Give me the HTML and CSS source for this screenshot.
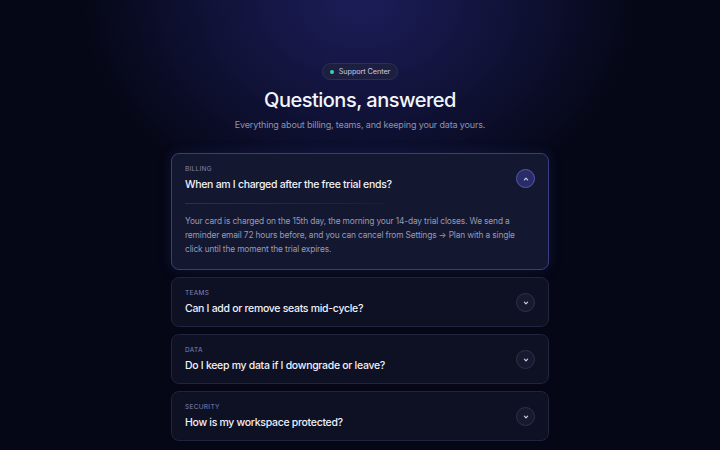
FILE: index.html
```html
<!DOCTYPE html>
<html lang="en">
<head>
    <meta charset="UTF-8">
    <meta name="viewport" content="width=device-width, initial-scale=1.0">
    <title>Support Center</title>
    <link rel="stylesheet" href="styles.css">
</head>
<body>
    <div class="glow"></div>
    <main class="container">
        <div class="badge"><span class="dot"></span>Support Center</div>
        <h1>Questions, answered</h1>
        <p class="lead">Everything about billing, teams, and keeping your data yours.</p>

        <div class="faq">
            <div class="item open">
                <div class="head">
                    <div>
                        <div class="tag">Billing</div>
                        <div class="question">When am I charged after the free trial ends?</div>
                    </div>
                    <span class="toggle">
                        <svg viewBox="0 0 10 10"><path d="M3.4 5.8 L5 4.2 L6.6 5.8"/></svg>
                    </span>
                </div>
                <div class="divider"></div>
                <p class="answer">Your card is charged on the 15th day, the morning your 14-day trial closes. We send a reminder email 72 hours before, and you can cancel from Settings → Plan with a single click until the moment the trial expires.</p>
            </div>

            <div class="item">
                <div class="head">
                    <div>
                        <div class="tag">Teams</div>
                        <div class="question">Can I add or remove seats mid-cycle?</div>
                    </div>
                    <span class="toggle">
                        <svg viewBox="0 0 10 10"><path d="M3.4 4.2 L5 5.8 L6.6 4.2"/></svg>
                    </span>
                </div>
            </div>

            <div class="item">
                <div class="head">
                    <div>
                        <div class="tag">Data</div>
                        <div class="question">Do I keep my data if I downgrade or leave?</div>
                    </div>
                    <span class="toggle">
                        <svg viewBox="0 0 10 10"><path d="M3.4 4.2 L5 5.8 L6.6 4.2"/></svg>
                    </span>
                </div>
            </div>

            <div class="item">
                <div class="head">
                    <div>
                        <div class="tag">Security</div>
                        <div class="question">How is my workspace protected?</div>
                    </div>
                    <span class="toggle">
                        <svg viewBox="0 0 10 10"><path d="M3.4 4.2 L5 5.8 L6.6 4.2"/></svg>
                    </span>
                </div>
            </div>
        </div>
    </main>
</body>
</html>
```

FILE: styles.css
```css
html, body {
    height: 100%;
}
body {
    margin: 0;
    font-family: "Inter", "Noto Sans", sans-serif;
    background-color: #050716;
    color: #e8eaf4;
    overflow: hidden;
    position: relative;
}
.glow {
    position: absolute;
    left: 0;
    right: 0;
    top: 0;
    height: 300px;
    background: radial-gradient(ellipse 280px 220px at 50% 0%, #1c1d58 0%, #12143d 45%, rgba(5,7,22,0) 100%);
    pointer-events: none;
}
.container {
    position: relative;
    width: 378px;
    margin: 0 auto;
    padding-top: 63px;
    text-align: center;
}
.badge {
    display: flex;
    width: fit-content;
    margin: 0 auto;
    align-items: center;
    gap: 5px;
    height: 15px;
    padding: 0 7px;
    border-radius: 10px;
    background: #1c1f40;
    border: 1px solid #2c3058;
    font-size: 7.3px;
    letter-spacing: -0.1px;
    color: #c9cce6;
}
.dot {
    width: 4px;
    height: 4px;
    border-radius: 50%;
    background: #3ad6a6;
}
h1 {
    margin: 7px 0 0;
    font-size: 20px;
    line-height: 26px;
    font-weight: 500;
    letter-spacing: -0.5px;
    color: #f4f5fb;
}
.lead {
    margin: 6px 0 0;
    font-size: 9px;
    letter-spacing: -0.15px;
    color: #8e93ad;
}
.faq {
    margin-top: 23px;
    display: flex;
    flex-direction: column;
    gap: 7px;
    text-align: left;
}
.item {
    background: #0e1124;
    border: 1px solid #20243c;
    border-radius: 8px;
    padding: 11px 13px 10px 13px;
}
.item.open {
    background: #141730;
    border-color: #393d80;
    box-shadow: 0 0 14px rgba(70, 72, 180, 0.18);
    padding-bottom: 13px;
}
.head {
    display: flex;
    align-items: center;
    justify-content: space-between;
}
.tag {
    font-size: 6.5px;
    letter-spacing: 0.3px;
    text-transform: uppercase;
    color: #7e84b6;
}
.question {
    margin-top: 5px;
    font-size: 10.5px;
    line-height: 14px;
    font-weight: 500;
    letter-spacing: -0.3px;
    color: #eef0f8;
}
.toggle {
    width: 17px;
    height: 17px;
    border-radius: 50%;
    background: #171a2e;
    border: 1px solid #2e3249;
    display: flex;
    align-items: center;
    justify-content: center;
}
.open .toggle {
    background: #2a2c68;
    border-color: #5558b6;
}
.toggle svg {
    width: 10px;
    height: 10px;
    fill: none;
    stroke: #c9cce6;
    stroke-width: 1.2;
    stroke-linecap: round;
    stroke-linejoin: round;
}
.divider {
    width: 200px;
    height: 1px;
    margin: 11px 0 10px;
    background: linear-gradient(90deg, #2c3050, rgba(44, 48, 80, 0.3));
}
.answer {
    margin: 0;
    padding-right: 4px;
    font-size: 8.4px;
    line-height: 14px;
    letter-spacing: -0.15px;
    color: #969bb3;
}
```
